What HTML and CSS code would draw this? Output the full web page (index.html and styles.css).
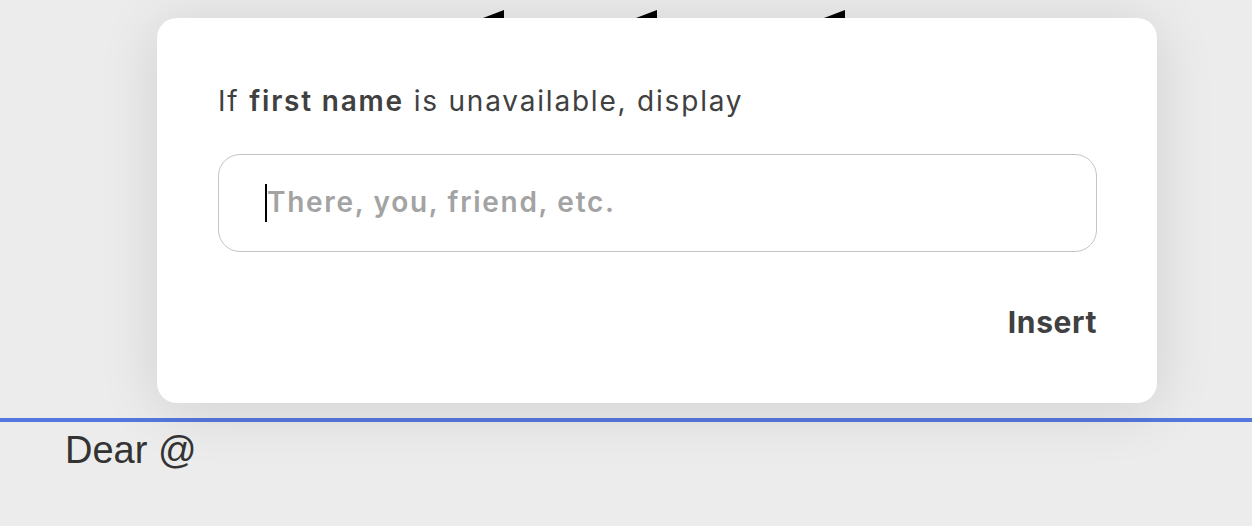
FILE: index.html
```html
<!DOCTYPE html>
<html>
<head>
<meta charset="utf-8">
<link rel="stylesheet" href="styles.css">
</head>
<body>
<div class="page">
  <div class="toolbar">
    <span class="wedge w1"></span>
    <span class="wedge w2"></span>
    <span class="wedge w3"></span>
  </div>
  <div class="editor">
    <p class="content">Dear @</p>
  </div>
  <div class="modal">
    <p class="label">If <b>first name</b> is unavailable, display</p>
    <div class="field">
      <span class="caret"></span><span class="placeholder">There, you, friend, etc.</span>
    </div>
    <div class="actions">
      <button class="insert">Insert</button>
    </div>
  </div>
</div>
</body>
</html>
```

FILE: styles.css
```css
html, body {
  margin: 0;
  padding: 0;
  background: #ececec;
}
.page {
  position: relative;
  width: 1252px;
  height: 526px;
  overflow: hidden;
  background: #ececec;
}
.toolbar {
  position: relative;
  height: 418px;
}
.wedge {
  position: absolute;
  top: 10px;
  width: 0;
  height: 0;
  border-bottom: 8px solid #000;
  border-left: 21px solid transparent;
}
.w1 { left: 483px; }
.w2 { left: 636px; }
.w3 { left: 824px; }
.editor {
  border-top: 4px solid #5577dd;
  padding: 6px 0 0 65px;
}
.content {
  margin: 0;
  font-family: "Liberation Sans", Arial, sans-serif;
  font-size: 38px;
  line-height: 44px;
  color: #333;
}
.modal {
  position: absolute;
  left: 157px;
  top: 18px;
  width: 1000px;
  height: 385px;
  box-sizing: border-box;
  background: #fff;
  border-radius: 20px;
  box-shadow: 0 6px 60px rgba(0,0,0,0.12);
  padding: 66px 60px 0 61px;
  font-family: Inter, "Noto Sans", sans-serif;
}
.label {
  margin: 0;
  font-size: 28px;
  line-height: 34px;
  color: #404040;
  font-weight: 400;
  letter-spacing: 1.8px;
}
.label b {
  font-weight: 600;
}
.field {
  margin-top: 36px;
  height: 98px;
  box-sizing: border-box;
  border: 1.5px solid #c4c4c4;
  border-radius: 22px;
  display: flex;
  align-items: center;
  padding-left: 46px;
}
.caret {
  width: 2px;
  height: 38px;
  background: #000;
}
.placeholder {
  font-size: 28px;
  line-height: 34px;
  font-weight: 600;
  color: #a3a3a3;
  letter-spacing: 1.7px;
  position: relative;
  top: -1px;
}
.actions {
  display: flex;
  justify-content: flex-end;
  margin-top: 52px;
}
.insert {
  border: 0;
  background: none;
  padding: 0;
  font-family: Inter, "Noto Sans", sans-serif;
  font-size: 30px;
  font-weight: 700;
  letter-spacing: 0.6px;
  color: #404040;
}
```
